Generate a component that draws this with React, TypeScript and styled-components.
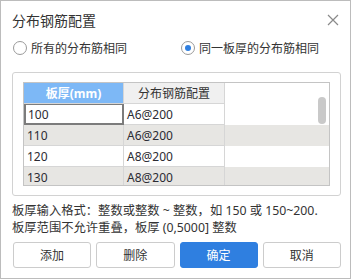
import styled, { createGlobalStyle } from 'styled-components';

const GlobalStyle = createGlobalStyle`
  html, body {
    margin: 0;
    padding: 0;
    background: #ffffff;
  }
  body {
    font-family: "Noto Sans", "Noto Sans CJK SC", sans-serif;
    color: #333333;
  }
`;

const Window = styled.div`
  box-sizing: border-box;
  width: 351px;
  height: 279px;
  border: 1px solid #bcbcbc;
  background: #ffffff;
  padding: 0 9px 0 11px;
  display: flex;
  flex-direction: column;
`;

const TitleBar = styled.div`
  height: 38px;
  display: flex;
  align-items: center;
  justify-content: space-between;
`;

const Title = styled.div`
  font-size: 14px;
  color: #333333;
`;

const CloseButton = styled.div`
  width: 12px;
  height: 12px;
  margin-right: 2px;
  display: flex;
  align-items: center;
  justify-content: center;
`;

const RadioRow = styled.div`
  height: 18px;
  display: grid;
  grid-template-columns: 168px 1fr;
  padding-left: 1px;
`;

const RadioOption = styled.label`
  display: flex;
  align-items: center;
  gap: 4px;
  font-size: 12px;
  color: #333333;
`;

const RadioCircle = styled.span<{ $checked?: boolean }>`
  box-sizing: border-box;
  width: 14px;
  height: 14px;
  border-radius: 50%;
  border: 1px solid #9a9a9a;
  background: #ffffff;
  display: flex;
  align-items: center;
  justify-content: center;

  &::after {
    content: '';
    width: 6px;
    height: 6px;
    border-radius: 50%;
    background: ${(p) => (p.$checked ? '#2f7fe0' : 'transparent')};
  }
`;

const GroupBox = styled.div`
  margin-top: 15px;
  box-sizing: border-box;
  height: 124px;
  border: 1px solid #d2d2d2;
  border-radius: 3px;
  padding: 9px 10px;
`;

const Grid = styled.div`
  position: relative;
  box-sizing: border-box;
  height: 104px;
  border: 1px solid #c4c4c4;
  background: #ffffff;
  overflow: hidden;
`;

const Row = styled.div<{ $alt?: boolean }>`
  display: grid;
  grid-template-columns: 100px 101px;
  height: 21px;
  background: ${(p) => (p.$alt ? '#e7e6e3' : '#ffffff')};
`;

const HeaderCell = styled.div<{ $active?: boolean }>`
  box-sizing: border-box;
  display: flex;
  align-items: center;
  justify-content: center;
  font-size: 12px;
  font-weight: ${(p) => (p.$active ? 700 : 400)};
  color: ${(p) => (p.$active ? '#ffffff' : '#333333')};
  background: ${(p) => (p.$active ? '#7db8f6' : '#f0f0f0')};
  border-right: 1px solid #d6d6d6;
  border-bottom: 1px solid #d6d6d6;
`;

const Cell = styled.div<{ $selected?: boolean }>`
  box-sizing: border-box;
  display: flex;
  align-items: center;
  padding-left: ${(p) => (p.$selected ? '2px' : '3px')};
  font-size: 12px;
  color: #2b2b33;
  border-right: 1px solid #d6d6d6;
  border-bottom: 1px solid #d6d6d6;
  ${(p) => p.$selected && 'border: 2px solid #7c7c7c; border-top-width: 1px;'}
`;

const ScrollThumb = styled.div`
  position: absolute;
  right: 3px;
  top: 14px;
  width: 8px;
  height: 27px;
  border-radius: 4px;
  background: #c9c9c9;
`;

const Hint = styled.div`
  margin-top: 6px;
  font-size: 12.3px;
  line-height: 17px;
  color: #333333;
  white-space: nowrap;
`;

const ButtonRow = styled.div`
  margin-top: 6px;
  display: grid;
  grid-template-columns: repeat(4, 1fr);
  gap: 5px;
  padding-left: 1px;
`;

const Button = styled.button<{ $primary?: boolean }>`
  box-sizing: border-box;
  height: 26px;
  border-radius: 3px;
  border: 1px solid ${(p) => (p.$primary ? '#2f7fe0' : '#cccccc')};
  background: ${(p) => (p.$primary ? '#2f7fe0' : '#ffffff')};
  color: ${(p) => (p.$primary ? '#ffffff' : '#333333')};
  font-family: "Noto Sans", "Noto Sans CJK SC", sans-serif;
  font-size: 12px;
  padding: 0;
`;

const rows = [
  { thickness: '100', config: 'A6@200' },
  { thickness: '110', config: 'A6@200' },
  { thickness: '120', config: 'A8@200' },
  { thickness: '130', config: 'A8@200' },
];

const App = () => (
  <>
    <GlobalStyle />
    <Window>
      <TitleBar>
        <Title>分布钢筋配置</Title>
        <CloseButton>
          <svg width="12" height="12" viewBox="0 0 12 12">
            <path d="M1 1 L11 11 M11 1 L1 11" stroke="#8a8a8a" strokeWidth="1.2" fill="none" />
          </svg>
        </CloseButton>
      </TitleBar>
      <RadioRow>
        <RadioOption>
          <RadioCircle />
          所有的分布筋相同
        </RadioOption>
        <RadioOption>
          <RadioCircle $checked />
          同一板厚的分布筋相同
        </RadioOption>
      </RadioRow>
      <GroupBox>
        <Grid>
          <Row>
            <HeaderCell $active>板厚(mm)</HeaderCell>
            <HeaderCell>分布钢筋配置</HeaderCell>
          </Row>
          {rows.map(({ thickness, config }, index) => (
            <Row key={thickness} $alt={index % 2 === 1}>
              <Cell $selected={index === 0}>{thickness}</Cell>
              <Cell>{config}</Cell>
            </Row>
          ))}
          <ScrollThumb />
        </Grid>
      </GroupBox>
      <Hint>
        板厚输入格式：整数或整数 ~ 整数，如 150 或 150~200.
        <br />
        板厚范围不允许重叠，板厚 (0,5000] 整数
      </Hint>
      <ButtonRow>
        <Button>添加</Button>
        <Button>删除</Button>
        <Button $primary>确定</Button>
        <Button>取消</Button>
      </ButtonRow>
    </Window>
  </>
);

export default App;
